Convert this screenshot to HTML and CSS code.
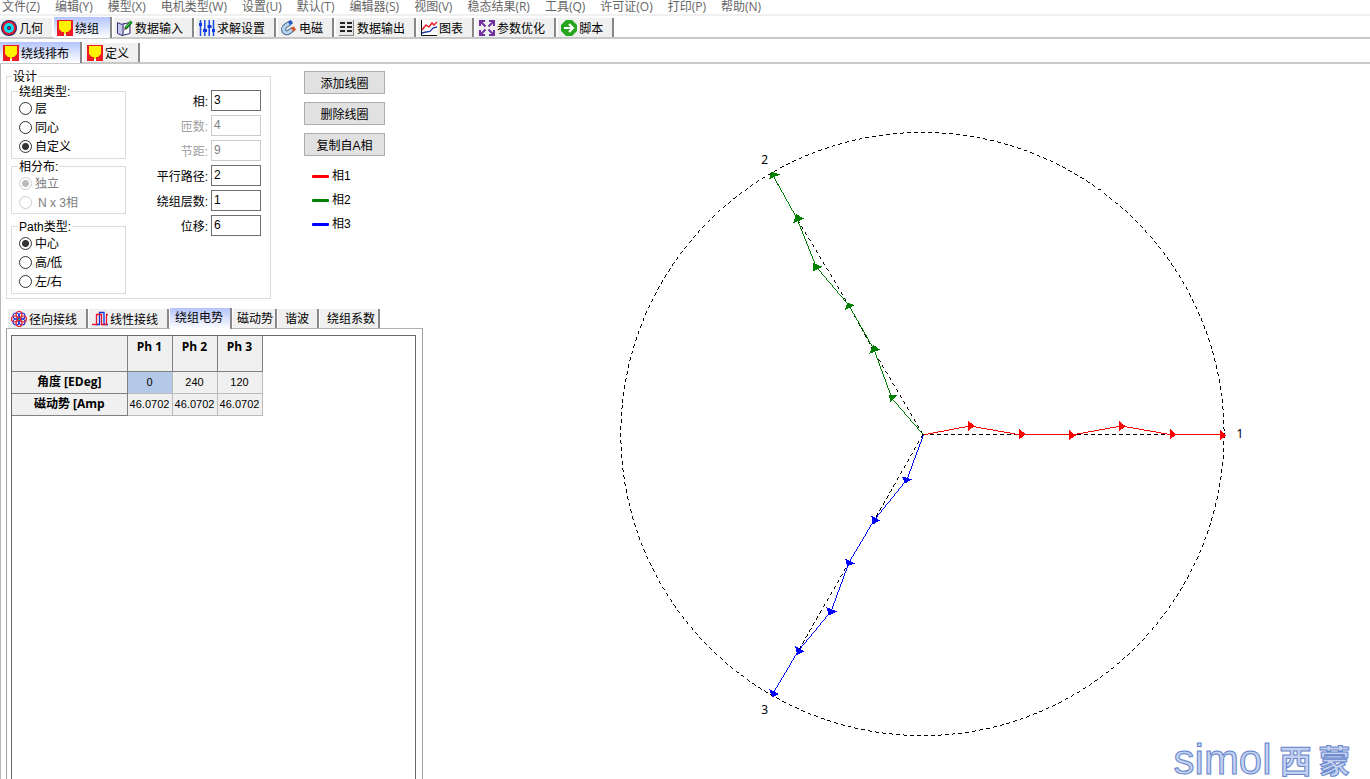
FILE: index.html
```html
<!DOCTYPE html>
<html lang="zh-CN">
<head>
<meta charset="utf-8">
<title>绕组</title>
<link rel="stylesheet" href="styles.css">
</head>
<body>
<svg class="defs" aria-hidden="true">
  <symbol id="slot" viewBox="0 0 16 16"><path fill="#ed1c24" d="M0 0h16v16H0z"/><path fill="#fff200" d="M2 1h12v8l-3 3H9v3H7v-3H5L2 9z"/><path fill="#fff" d="M7 14h2v2H7z"/></symbol>
</svg>
<nav class="menu">
  <button>文件(Z)</button><button>编辑(Y)</button><button>模型(X)</button><button>电机类型(W)</button><button>设置(U)</button><button>默认(T)</button><button>编辑器(S)</button><button>视图(V)</button><button>稳态结果(R)</button><button>工具(Q)</button><button>许可证(O)</button><button>打印(P)</button><button>帮助(N)</button>
</nav>
<div class="tabs" role="tablist">
  <button class="tab first" role="tab"><svg class="icon" viewBox="0 0 16 16"><circle cx="8" cy="8" r="8" fill="#20206a"/><circle cx="8" cy="8" r="7" fill="#e0182d"/><circle cx="8" cy="8" r="5" fill="#10e0f0"/><circle cx="8" cy="8" r="2" fill="#20206a"/><circle cx="8" cy="8" r="1" fill="#e33"/></svg>几何</button>
  <button class="tab active" role="tab" aria-selected="true"><svg class="icon"><use href="#slot"/></svg>绕组</button>
  <button class="tab" role="tab"><svg class="icon" viewBox="0 0 16 16"><path fill="#c9c9ee" stroke="#34346e" d="M.5 2.500 5 4.500l1-1V14l-1 1.500-4.500-2zM6 4l7-1.500v11L5 15.500"/><path fill="#fff" d="M7 5l5-1v9l-5 1z"/><path stroke="#0a7a18" stroke-width="3" d="m14.500 1.500-6 7"/><path stroke="#5ad34a" d="m14 1.500-5 6"/><path fill="#421" d="m7 10 1-2.500L9.500 9z"/></svg>数据输入</button>
  <button class="tab" role="tab"><svg class="icon" viewBox="0 0 16 16"><path stroke="#1c4be0" stroke-width="1.500" d="M1.500 0v16M5.800 0v16M10.200 0v16M14.500 0v16"/><path fill="#1038e8" d="M0 3h3v3H0zM4 9h4v3H4zM8.500 5h4v3h-4zM13 9h3v3h-3z"/></svg>求解设置</button>
  <button class="tab" role="tab"><svg class="icon" viewBox="0 0 16 16"><path fill="none" stroke="#45668e" stroke-width="5" d="M9 3 5 5.500C0 9 4 15 8 12l4-3"/><path fill="none" stroke="#b8d4ec" stroke-width="3" d="M9 3 5 5.500C0 9 4 15 8 12l4-3"/><path stroke="#2858b8" stroke-width="4" d="m8 3.500 3-2"/><path stroke="#d4572d" stroke-width="4" d="m11 10 3-2"/></svg>电磁</button>
  <button class="tab" role="tab"><svg class="icon" viewBox="0 0 16 16"><path fill="#e7e7e7" d="M0 0h15v15H0z"/><path stroke="#888" d="M14.500 0v15M0 15.500h15"/><path stroke="#222" stroke-width="2" d="M1 3h5M8 3h5M1 7h5M8 7h5M1 11h5M8 11h5"/></svg>数据输出</button>
  <button class="tab" role="tab"><svg class="icon" viewBox="0 0 16 16"><path fill="#fff" d="M0 0h16v16H0z"/><path fill="none" stroke="#111" d="M.5 0v15.500H16"/><path fill="none" stroke="#e8202a" stroke-width="1.500" d="m1 10 4-5 3 2 3-4 2 2 3-3"/><path fill="none" stroke="#2438b0" stroke-width="1.300" d="m1 13 4-1 4-.5L12 8l4-1"/></svg>图表</button>
  <button class="tab" role="tab"><svg class="icon" viewBox="0 0 16 16"><path stroke="#7030a0" stroke-width="2" d="m1 1 5.500 5.500M15 1 9.500 6.500M1 15l5.500-5.500M15 15 9.500 9.500"/><path fill="#7030a0" d="M0 0h6v2H2v4H0zM10 0h6v6h-2V2h-4zM0 10h2v4h4v2H0zM14 10h2v6h-6v-2h4z"/></svg>参数优化</button>
  <button class="tab" role="tab"><svg class="icon" viewBox="0 0 16 16"><path fill="#26a51e" d="M5 0h6l5 5v6l-5 5H5l-5-5V5z"/><path fill="none" stroke="#fff" stroke-width="2.200" d="M3 8h9M8 4l4 4-4 4"/></svg>脚本</button>
</div>
<div class="tabs sub" role="tablist">
  <button class="tab active" role="tab" aria-selected="true"><svg class="icon"><use href="#slot"/></svg>绕线排布</button>
  <button class="tab" role="tab"><svg class="icon"><use href="#slot"/></svg>定义</button>
</div>
<main class="content">
  <section class="left">
    <div class="setup">
      <fieldset class="design">
        <legend>设计</legend>
        <div class="columns">
          <div class="groups">
            <fieldset class="group">
              <legend>绕组类型:</legend>
              <label class="option"><input type="radio" name="wtype">层</label>
              <label class="option"><input type="radio" name="wtype">同心</label>
              <label class="option"><input type="radio" name="wtype" checked>自定义</label>
            </fieldset>
            <fieldset class="group spaced" disabled>
              <legend>相分布:</legend>
              <label class="option"><input type="radio" name="dist" checked>独立</label>
              <label class="option"><input type="radio" name="dist"><span class="nx">N x 3相</span></label>
            </fieldset>
            <fieldset class="group">
              <legend>Path类型:</legend>
              <label class="option"><input type="radio" name="path" checked>中心</label>
              <label class="option"><input type="radio" name="path">高/低</label>
              <label class="option"><input type="radio" name="path">左/右</label>
            </fieldset>
          </div>
          <div class="fields">
            <label for="phase">相:</label><input id="phase" value="3">
            <label for="turns" class="off">匝数:</label><input id="turns" value="4" disabled>
            <label for="throw" class="off">节距:</label><input id="throw" value="9" disabled>
            <label for="paths">平行路径:</label><input id="paths" value="2">
            <label for="layers">绕组层数:</label><input id="layers" value="1">
            <label for="offset">位移:</label><input id="offset" value="6">
          </div>
        </div>
      </fieldset>
      <div class="actions">
        <button class="push">添加线圈</button>
        <button class="push">删除线圈</button>
        <button class="push">复制自A相</button>
        <ul class="key">
          <li><i class="line red"></i>相1</li>
          <li><i class="line green"></i>相2</li>
          <li><i class="line blue"></i>相3</li>
        </ul>
      </div>
    </div>
    <div class="tabs lower" role="tablist">
      <button class="tab" role="tab"><svg class="icon" viewBox="0 0 16 16"><circle cx="8" cy="8" r="3" fill="#30d890"/><g fill="none" stroke-width="1.200"><g stroke="#2030e0"><circle cx="11" cy="5" r="3"/><circle cx="11" cy="11" r="3"/><circle cx="5" cy="11" r="3"/><circle cx="5" cy="5" r="3"/></g><g stroke="#e8202a"><circle cx="8" cy="3.500" r="3"/><circle cx="12.500" cy="8" r="3"/><circle cx="8" cy="12.500" r="3"/><circle cx="3.500" cy="8" r="3"/></g></g></svg>径向接线</button>
      <button class="tab" role="tab"><svg class="icon" viewBox="0 0 16 16"><path fill="none" stroke="#1030e0" stroke-width="1.300" d="M4 13.500h3.500v-12H12v12h4"/><path fill="none" stroke="#e8102a" stroke-width="1.300" d="M0 13.500h4.500v-10h5v10h5v-10H16"/></svg>线性接线</button>
      <button class="tab plain active" role="tab" aria-selected="true">绕组电势</button>
      <button class="tab plain slim" role="tab">磁动势</button>
      <button class="tab plain" role="tab">谐波</button>
      <button class="tab plain last" role="tab">绕组系数</button>
    </div>
    <div class="panel">
      <div class="sheet">
        <table class="grid">
          <thead><tr><th class="name"></th><th>Ph 1</th><th>Ph 2</th><th>Ph 3</th></tr></thead>
          <tbody>
            <tr><th class="name">角度 [EDeg]</th><td class="picked">0</td><td>240</td><td>120</td></tr>
            <tr><th class="name">磁动势 [Amp</th><td>46.0702</td><td>46.0702</td><td>46.0702</td></tr>
          </tbody>
        </table>
      </div>
    </div>
  </section>
  <section class="plot">
    <svg class="chart" viewBox="423 63 947 716" role="img" aria-label="绕组电势">
      <g class="dash">
        <circle cx="922.5" cy="433.500" r="302"/>
        <path d="M923 434.500h149l153-1M923 434l-50-85-24-44-52-87-24-43M923 434l-49 86-25 42-51 89-25 42"/>
      </g>
      <g class="phase-red"><path class="trace" d="M923 434.500l47-9 51 9h51l50-9 51 9h52"/><path class="heads" d="M968 420v10.500l7-5zM1019 428v11l7-5zM1069 429v11l7-5zM1119 420v11l7-5zM1170 428v11l7-5zM1220 429v11l7-5z"/></g>
      <g class="phase-green"><path class="trace" d="M923.500 434.500 892 398 874 349 849 305 816 266 797 218 773 175"/><path class="heads" d="M771 171l9 2.500-11 5zM796 213l8 5-11 4.500zM813 262l9 4-9 5zM847 302l8 2.500-10 5zM873 344l7 5-11 4.500zM889 394h9l-8 7.500z"/></g>
      <g class="phase-blue"><path class="trace" d="M923.500 434.500 907 479 874 520 849 562 831 611 798 651 773 693"/><path class="heads" d="M902 476l10 3-7 4zM871 515l9 5-7 4zM845 558l10 5-8 3zM826 607l11 4-8 4zM795 646l9 5-7 4zM769 689l10 5-7 3z"/></g>
      <g class="mark"><text x="1237" y="438">1</text><text x="761" y="163">2</text><text x="761" y="714">3</text></g>
      <g class="brand"><text class="latin" x="1174" y="774">simol</text><text class="han" x="1280" y="773">西</text><text class="han" x="1319" y="773">蒙</text></g>
    </svg>
  </section>
</main>
</body>
</html>
```

FILE: styles.css
```css
* { box-sizing: border-box; }
body {
  margin: 0;
  height: 100vh;
  display: flex;
  flex-direction: column;
  overflow: hidden;
  background: #fff;
  color: #000;
  font: 12px/14px "Liberation Sans", "Noto Sans CJK SC", sans-serif;
}
button, input { font: inherit; color: inherit; }
.defs { display: none; }
.menu {
  display: flex;
  flex: none;
  gap: 15px;
  height: 16px;
  padding-left: 2px;
  border-bottom: 2px solid #f0f0f0;
}
.menu button {
  border: 0;
  padding: 0;
  background: none;
  color: #666;
  font-family: "Open Sans", "Noto Sans CJK SC", sans-serif;
  line-height: 14px;
  height: 14px;
  white-space: nowrap;
}
.tabs {
  display: flex;
  flex: none;
  align-items: flex-end;
  gap: 2px;
  height: 23px;
  border-bottom: 2px solid #c8c8c8;
}
.tabs.sub { height: 25px; }
.tab {
  display: flex;
  align-items: flex-end;
  gap: 2px;
  height: 19px;
  padding: 0 9px 1px 3px;
  border: 0;
  border-right: 2px solid #888;
  background: #f0f0f0;
  white-space: nowrap;
}
.tab.first { padding-left: 1px; padding-right: 7px; border-right-color: #f0f0f0; }
.tab.active {
  height: 21px;
  margin-bottom: -1px;
  padding-right: 11px;
  padding-bottom: 2px;
  background: linear-gradient(#b4c4fc, #fff);
}
.icon { width: 16px; height: 16px; flex: none; }
.content { display: flex; flex: 1; min-height: 0; border-left: 1px solid #b8b8b8; }
.left { display: flex; flex-direction: column; width: 422px; flex: none; }
.setup { display: flex; gap: 33px; padding: 5px 0 0 5px; }
fieldset { margin: 0; border: 1px solid #dcdcdc; min-width: 0; }
legend { padding: 0 1px; height: 14px; line-height: 16px; }
.design { width: 265px; padding: 1px 9px 4px 4px; }
.design > legend { margin-left: 1px; }
.columns { display: flex; justify-content: space-between; }
.groups { display: flex; flex-direction: column; width: 115px; }
.group { padding: 1px 0 2px 7px; }
.group legend { margin-left: -1px; }
.spaced { margin-bottom: 5px; padding-bottom: 1px; }
.option { display: flex; align-items: center; gap: 3px; height: 19px; }
.option input {
  appearance: none;
  flex: none;
  width: 13px;
  height: 13px;
  margin: 0;
  border: 1px solid #333;
  border-radius: 50%;
  background: #fff;
}
.option input:checked { background: radial-gradient(circle, #333 0 3px, #fff 4px); }
.option input:disabled { border-color: #ccc; }
.option input:checked:disabled { background: radial-gradient(circle, #bbb 0 3px, #fff 4px); }
.group:disabled .option { color: #808080; }
.nx { padding-left: 3px; }
.fields {
  display: grid;
  grid-template-columns: auto 50px;
  grid-auto-rows: 21px;
  gap: 4px 3px;
  padding-top: 6px;
  align-content: start;
  align-items: center;
  text-align: right;
}
.fields label { padding-top: 2px; }
.fields input {
  width: 50px;
  height: 21px;
  padding: 0 2px 2px;
  border: 1px solid #707070;
  background: #fff;
}
.fields .off { color: #a0a0a0; }
.fields input:disabled { border-color: #ccc; color: #808080; }
.actions { display: flex; flex-direction: column; gap: 8px; width: 81px; padding-top: 2px; }
.push { height: 23px; padding: 2px 0 0; border: 1px solid #adadad; background: #e1e1e1; }
.key { margin: 0; padding: 0 0 0 8px; list-style: none; }
.key li { display: flex; align-items: center; gap: 3px; height: 24px; }
.line { width: 17px; height: 3px; border-radius: 1px; }
.red { background: #f00; }
.green { background: #008000; }
.blue { background: #00f; }
.tabs.lower { gap: 1px; height: 30px; margin-left: 5px; padding-left: 2px; border-bottom: 1px solid #b0b0b0; }
.tab.plain { padding: 0 8px 2px 7px; }
.tab.plain.active { padding: 0 7px 4px 5px; }
.tab.plain.slim { padding: 0 2px 2px 4px; }
.tab.plain.last { padding-right: 3px; }
.panel {
  flex: 1;
  min-height: 0;
  margin-left: 5px;
  padding: 6px 6px 0 4px;
  border: solid #a0a0a0;
  border-width: 0 1px 0 1px;
}
.sheet { height: 100%; border: 1px solid #696969; border-bottom: 0; }
.grid { border-collapse: collapse; table-layout: fixed; width: 250px; }
.grid th, .grid td {
  width: 45px;
  height: 22px;
  padding: 0;
  border: 1px solid #bbb;
  background: #f0f0f0;
  text-align: center;
  white-space: nowrap;
}
.grid th { border-color: #808080; font-family: "Open Sans", "Noto Sans CJK SC", sans-serif; }
.grid td { font-size: 11px; }
.grid thead th { height: 35px; padding-top: 4px; border-top: 0; vertical-align: top; }
.grid .name { width: 115px; border-left: 0; }
.grid .picked { background: #b4c8e8; }
.plot { flex: 1; min-width: 0; }
.chart { display: block; width: 100%; height: 100%; }
.dash { fill: none; stroke: #000; stroke-dasharray: 4 3; shape-rendering: crispEdges; }
.trace { fill: none; stroke: currentColor; shape-rendering: crispEdges; }
.heads { fill: currentColor; shape-rendering: crispEdges; }
.phase-red { color: #f00; }
.phase-green { color: #008000; }
.phase-blue { color: #00f; }
.mark { font-family: "Noto Sans", sans-serif; font-size: 12px; }
.brand { fill: #c3d1ef; stroke: #6484cc; }
.latin { font-size: 42px; }
.han { font-size: 32px; font-weight: bold; }
```
